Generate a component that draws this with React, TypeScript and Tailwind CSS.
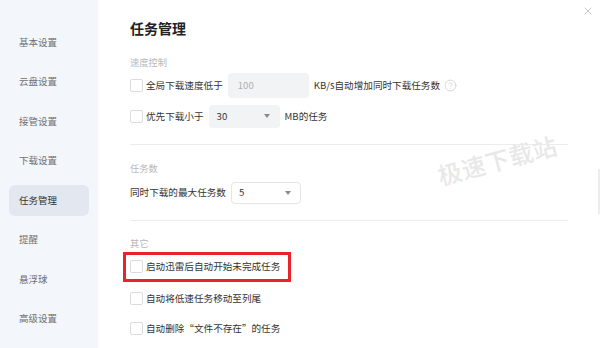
import { CircleHelp, X } from 'lucide-react';

const font = { fontFamily: '"Noto Sans CJK SC", "Noto Sans", sans-serif' };

const navItems = ['基本设置', '云盘设置', '接管设置', '下载设置', '任务管理', '提醒', '悬浮球', '高级设置'];

const Checkbox = () => (
  <span className="inline-block w-[13px] h-[13px] shrink-0 rounded-[2px] border border-[#dcdcdc] bg-white" />
);

const Caret = () => <span className="block w-0 h-0 border-x-[3.5px] border-x-transparent border-t-[4px] border-t-[#8a8a8a]" />;

const SectionLabel = ({ children, className = '' }: { children: React.ReactNode; className?: string }) => (
  <div className={`text-[9.25px] leading-[18px] text-[#b8b8b8] ${className}`}>{children}</div>
);

export default function App() {
  return (
    <div className="relative flex w-[600px] h-[348px] overflow-hidden bg-white text-[#333] whitespace-nowrap" style={font}>
      {/* Sidebar */}
      <aside className="w-[98px] shrink-0 bg-[#f3f6fb] px-[9px] pt-[26.5px] flex flex-col gap-[8.5px]">
        {navItems.map((item) => (
          <div
            key={item}
            className={`h-[31px] flex items-center pl-[10px] rounded-[6px] text-[9.5px] ${
              item === '任务管理' ? 'bg-[#e3e8f0] text-[#333]' : 'text-[#707070]'
            }`}
          >
            {item}
          </div>
        ))}
      </aside>

      {/* Main */}
      <main className="flex-1 pl-[32px] pr-[32px] pt-[17px]">
        <h1 className="text-[14px] leading-[22px] font-bold text-[#222]">任务管理</h1>

        <SectionLabel className="mt-[14px]">速度控制</SectionLabel>
        <div className="mt-[1.5px] h-[25px] flex items-center text-[9.6px]">
          <Checkbox />
          <span className="ml-[3px]">全局下载速度低于</span>
          <div className="ml-[5px] w-[81px] h-[25px] rounded-[4px] bg-[#f2f3f5] flex items-center pl-[10px] text-[#b0b0b0]">
            100
          </div>
          <span className="ml-[5px]">KB/s自动增加同时下载任务数</span>
          <CircleHelp className="ml-[4px] text-[#c4c4c4]" size={13} strokeWidth={1.2} />
        </div>
        <div className="mt-[7px] h-[23px] flex items-center text-[9.6px]">
          <Checkbox />
          <span className="ml-[3px]">优先下载小于</span>
          <div className="ml-[5px] w-[71px] h-[23px] rounded-[4px] bg-[#f2f3f5] flex items-center justify-between pl-[8px] pr-[10px]">
            <span>30</span>
            <Caret />
          </div>
          <span className="ml-[5px]">MB的任务</span>
        </div>

        <div className="mt-[16px] h-px bg-[#ececec]" />

        <SectionLabel className="mt-[14px]">任务数</SectionLabel>
        <div className="mt-[5px] h-[22px] flex items-center text-[9.6px]">
          <span>同时下载的最大任务数</span>
          <div className="ml-[5px] w-[70px] h-[22px] rounded-[4px] border border-[#e6e6e6] bg-white flex items-center justify-between pl-[7px] pr-[9px]">
            <span>5</span>
            <Caret />
          </div>
        </div>

        <div className="mt-[16px] h-px bg-[#ececec]" />

        <SectionLabel className="mt-[13px]">其它</SectionLabel>
        <div className="-ml-[7px] w-[168px] h-[30px] border-[3px] border-[#e8232b] pl-[4px] flex items-center text-[9.6px]">
          <Checkbox />
          <span className="ml-[3px]">启动迅雷后自动开始未完成任务</span>
        </div>
        <div className="mt-[1px] h-[31px] flex items-center text-[9.6px]">
          <Checkbox />
          <span className="ml-[3px]">自动将低速任务移动至列尾</span>
        </div>
        <div className="h-[29px] flex items-center text-[9.6px]">
          <Checkbox />
          <span className="ml-[3px]">自动删除“文件不存在”的任务</span>
        </div>
      </main>

      {/* Close */}
      <X className="absolute top-[5px] right-[6px] text-[#a0a0a0]" size={12} strokeWidth={1.2} />

      {/* Watermark */}
      <div className="absolute left-[436px] top-[148px] -rotate-[15deg] text-[24px] font-medium leading-none text-[#e8e8e8] tracking-[0.5px] pointer-events-none">
        极速下载站
      </div>

      {/* Scrollbar */}
      <div className="absolute right-0 top-[169px] w-[2px] h-[45px] bg-[#ececec]" />
    </div>
  );
}
